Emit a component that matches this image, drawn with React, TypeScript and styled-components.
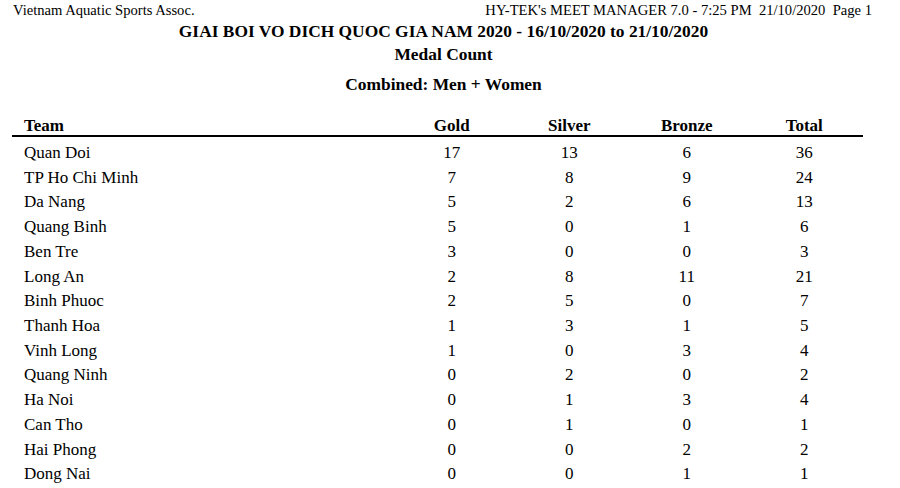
import React from 'react'
import styled, { createGlobalStyle } from 'styled-components'

interface TeamRow {
    team: string
    gold: number
    silver: number
    bronze: number
    total: number
}

const rows: TeamRow[] = [
    { team: 'Quan Doi', gold: 17, silver: 13, bronze: 6, total: 36 },
    { team: 'TP Ho Chi Minh', gold: 7, silver: 8, bronze: 9, total: 24 },
    { team: 'Da Nang', gold: 5, silver: 2, bronze: 6, total: 13 },
    { team: 'Quang Binh', gold: 5, silver: 0, bronze: 1, total: 6 },
    { team: 'Ben Tre', gold: 3, silver: 0, bronze: 0, total: 3 },
    { team: 'Long An', gold: 2, silver: 8, bronze: 11, total: 21 },
    { team: 'Binh Phuoc', gold: 2, silver: 5, bronze: 0, total: 7 },
    { team: 'Thanh Hoa', gold: 1, silver: 3, bronze: 1, total: 5 },
    { team: 'Vinh Long', gold: 1, silver: 0, bronze: 3, total: 4 },
    { team: 'Quang Ninh', gold: 0, silver: 2, bronze: 0, total: 2 },
    { team: 'Ha Noi', gold: 0, silver: 1, bronze: 3, total: 4 },
    { team: 'Can Tho', gold: 0, silver: 1, bronze: 0, total: 1 },
    { team: 'Hai Phong', gold: 0, silver: 0, bronze: 2, total: 2 },
    { team: 'Dong Nai', gold: 0, silver: 0, bronze: 1, total: 1 },
]

const GlobalStyle = createGlobalStyle`
    html, body {
        margin: 0;
        padding: 0;
        background: #fff;
    }
    body {
        font-family: 'Liberation Serif', 'Times New Roman', serif;
        color: #000;
    }
`

const App: React.FC = () => {
    return (
        <Page>
            <GlobalStyle />
            <TopLine>
                <span>Vietnam Aquatic Sports Assoc.</span>
                <span>HY-TEK's MEET MANAGER 7.0 - 7:25 PM  21/10/2020  Page 1</span>
            </TopLine>
            <Heading>GIAI BOI VO DICH QUOC GIA NAM 2020 - 16/10/2020 to 21/10/2020</Heading>
            <SubHeading>Medal Count</SubHeading>
            <Combined>Combined: Men + Women</Combined>
            <Table>
                <HeaderRow>
                    <TeamCell>Team</TeamCell>
                    <NumCell>Gold</NumCell>
                    <NumCell>Silver</NumCell>
                    <NumCell>Bronze</NumCell>
                    <NumCell>Total</NumCell>
                </HeaderRow>
                <Body>
                    {rows.map((r) => (
                        <Row key={r.team}>
                            <TeamCell>{r.team}</TeamCell>
                            <NumCell>{r.gold}</NumCell>
                            <NumCell>{r.silver}</NumCell>
                            <NumCell>{r.bronze}</NumCell>
                            <NumCell>{r.total}</NumCell>
                        </Row>
                    ))}
                </Body>
            </Table>
        </Page>
    )
}

const Page = styled.div`
    width: 900px;
    height: 488px;
    overflow: hidden;
    box-sizing: border-box;
`
const TopLine = styled.div`
    display: flex;
    justify-content: space-between;
    padding: 1px 28px 0 13px;
    font-size: 14.6px;
    line-height: 18px;
    white-space: pre;
`
const Heading = styled.h1`
    margin: 2px 13px 0 0;
    font-size: 17.4px;
    line-height: 20px;
    font-weight: 700;
    text-align: center;
`
const SubHeading = styled.h2`
    margin: 3px 13px 0 0;
    font-size: 17.4px;
    line-height: 20px;
    font-weight: 700;
    text-align: center;
`
const Combined = styled.h3`
    margin: 9.8px 13px 0 0;
    font-size: 17.4px;
    line-height: 20px;
    font-weight: 700;
    text-align: center;
`
const Table = styled.div`
    margin: 23px 0 0 12px;
    width: 851px;
    font-size: 17px;
`
const HeaderRow = styled.div`
    display: grid;
    grid-template-columns: 381px repeat(4, 117.5px);
    line-height: 18px;
    font-weight: 700;
    border-bottom: 2px solid #000;
`
const Body = styled.div`
    padding-top: 4.2px;
`
const Row = styled.div`
    display: grid;
    grid-template-columns: 381px repeat(4, 117.5px);
    line-height: 24.72px;
`
const TeamCell = styled.div`
    padding-left: 12px;
`
const NumCell = styled.div`
    text-align: center;
`

export default App
